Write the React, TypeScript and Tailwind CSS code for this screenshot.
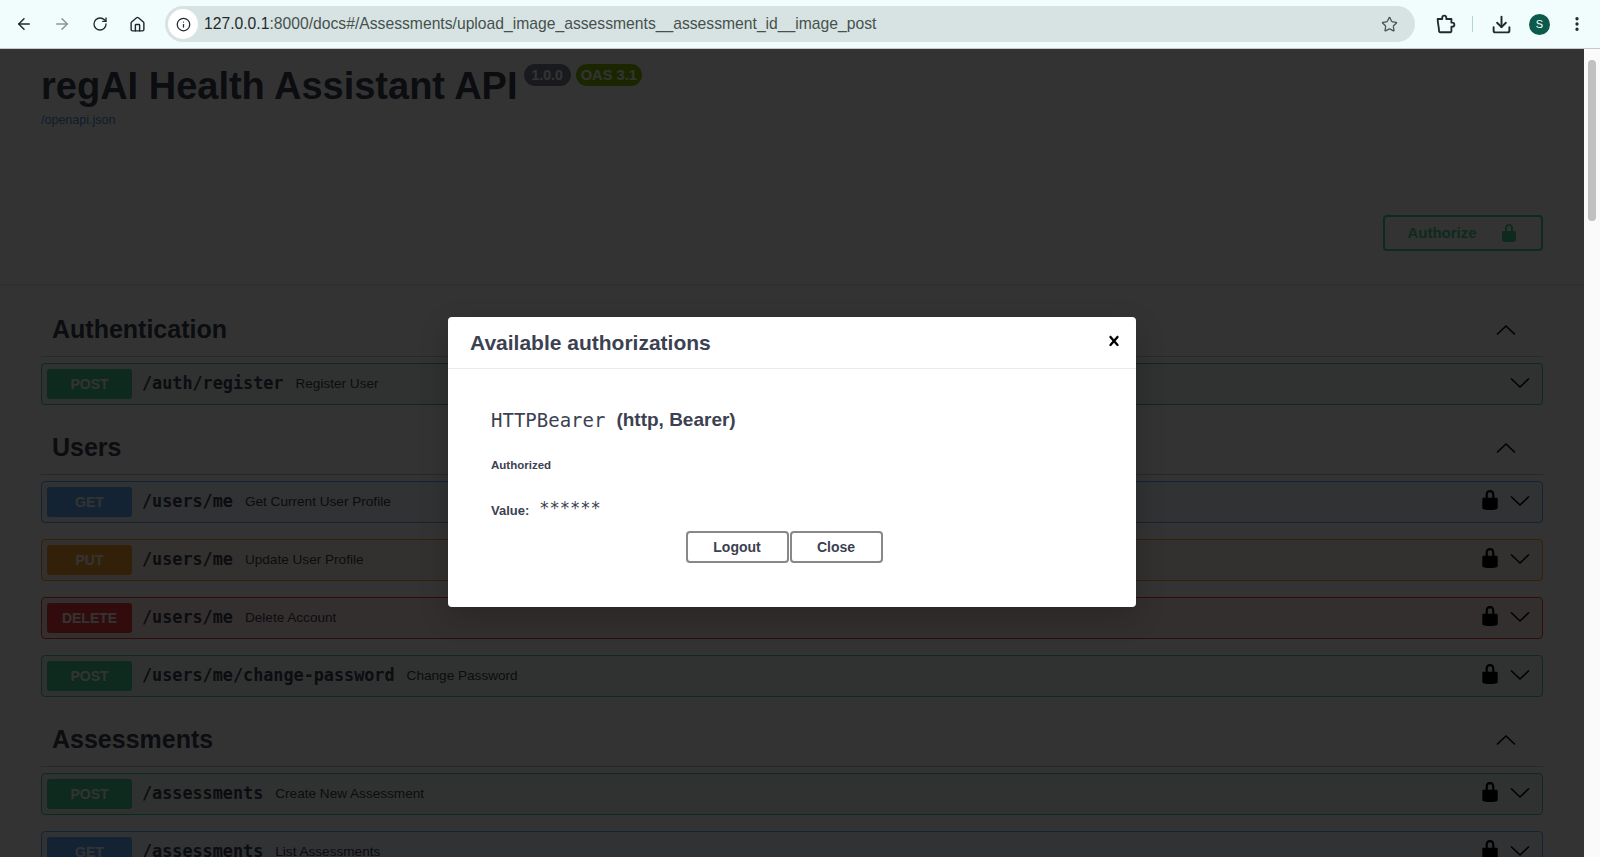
import React from "react";
import { ArrowLeft, ArrowRight, RotateCw, Home, Info, Star, Download, MoreVertical } from "lucide-react";

const LOCK =
  "M15.8 8H14V5.6C14 2.703 12.665 1 10 1 7.334 1 6 2.703 6 5.6V8H4c-.553 0-1 .646-1 1.199V17c0 .549.428 1.139.951 1.307l1.197.387C5.672 18.861 6.55 19 7.1 19h5.8c.549 0 1.428-.139 1.951-.307l1.196-.387c.524-.167.953-.757.953-1.306V9.199C17 8.646 16.352 8 15.8 8zM12 8H8V5.199C8 3.754 8.797 3 10 3c1.203 0 2 .754 2 2.199V8z";

function Lock({ className }: { className: string }) {
  return (
    <svg viewBox="0 0 20 20" className={className} fill="currentColor">
      <path d={LOCK} />
    </svg>
  );
}

const methodStyles = {
  POST: { row: "border-[#49cc90] bg-[#49cc90]/10", badge: "bg-[#49cc90]" },
  GET: { row: "border-[#61affe] bg-[#61affe]/10", badge: "bg-[#61affe]" },
  PUT: { row: "border-[#fca130] bg-[#fca130]/10", badge: "bg-[#fca130]" },
  DELETE: { row: "border-[#f93e3e] bg-[#f93e3e]/10", badge: "bg-[#f93e3e]" },
};

type Method = keyof typeof methodStyles;

function Operation({ method, path, summary, locked = true }: { method: Method; path: string; summary: string; locked?: boolean }) {
  const s = methodStyles[method];
  return (
    <div className={`flex h-[42px] shrink-0 items-center rounded border pl-[5px] pr-[12px] ${s.row}`}>
      <div className={`flex h-[30px] w-[85px] shrink-0 items-center justify-center rounded-[3px] text-sm font-bold text-white ${s.badge}`}>
        {method}
      </div>
      <span className="ml-[10px] font-['DejaVu_Sans_Mono',monospace] text-[16.8px] font-bold text-[#3b4151]">{path}</span>
      <span className="ml-[12px] text-[13.6px] text-[#3b4151]">{summary}</span>
      <div className="ml-auto flex items-center gap-[7px] text-black">
        {locked && <Lock className="mb-[3px] h-[22px] w-[22px]" />}
        <svg viewBox="0 0 20 12" className="mb-[2px] ml-[2px] h-[12px] w-[20px]" fill="none" stroke="currentColor" strokeWidth="1.6">
          <path d="M1 1.5l9 8.5 9-8.5" />
        </svg>
      </div>
    </div>
  );
}

function Section({ title, children }: { title: string; children: React.ReactNode }) {
  return (
    <section>
      <div className="flex h-[53px] items-center justify-between border-b border-[#3b4151]/30 pl-[11px] pr-[27px]">
        <h3 className="text-[25px] font-bold text-[#3b4151]">{title}</h3>
        <svg viewBox="0 0 20 12" className="h-[12px] w-[20px] text-black" fill="none" stroke="currentColor" strokeWidth="1.6">
          <path d="M1 10.5l9-8.5 9 8.5" />
        </svg>
      </div>
      <div className="mt-[6px] flex flex-col gap-[16px]">{children}</div>
    </section>
  );
}

function Browser() {
  return (
    <div className="flex h-[49px] shrink-0 items-center border-b border-[#c4cccb] bg-[#f1fdfc] pl-[15px] pr-[13px] text-[#1f2a2c]">
      <ArrowLeft size={18} strokeWidth={2} />
      <ArrowRight size={18} strokeWidth={2} className="ml-[20px] text-[#8a9596]" />
      <RotateCw size={16} strokeWidth={2} className="ml-[21px]" />
      <Home size={17} strokeWidth={2} className="ml-[21px]" />
      <div className="ml-[19px] flex h-[36px] w-[1250px] items-center rounded-full bg-[#d7e3e2] pl-[3px] pr-[17px]">
        <div className="flex h-[30px] w-[30px] items-center justify-center rounded-full bg-white">
          <Info size={15} strokeWidth={2} />
        </div>
        <span className="ml-[6px] text-[15.7px] text-[#46514f]">
          <span className="text-[#1f2a2c]">127.0.0.1</span>:8000/docs#/Assessments/upload_image_assessments__assessment_id__image_post
        </span>
        <Star size={17} strokeWidth={1.8} className="ml-auto text-[#4a5453]" />
      </div>
      {/* chrome's extensions puzzle, lucide's one has the knobs elsewhere */}
      <svg viewBox="0 0 24 24" className="ml-[19px] h-[22px] w-[22px]" fill="none" stroke="currentColor" strokeWidth="2" strokeLinejoin="round">
        <path d="M4 6.5h5V5a2.2 2.2 0 0 1 4.4 0v1.500H19V10.500h1a2.200 2.200 0 0 1 0 4.400h-1V20a1 1 0 0 1-1 1H6.500a1 1 0 0 1-1-1c0-4.500-1.500-9-1.500-13.500z" />
      </svg>
      <div className="ml-[16px] h-[16px] w-px bg-[#b9d3d1]" />
      <Download size={21} strokeWidth={2.2} className="ml-[18px]" />
      <div className="ml-[17px] flex h-[21px] w-[21px] items-center justify-center rounded-full bg-[#0b5a4b] text-[11px] text-white">S</div>
      <MoreVertical size={18} strokeWidth={2.4} className="ml-[18px]" />
    </div>
  );
}

export default function App() {
  return (
    <div className="flex h-[857px] w-[1600px] flex-col overflow-hidden bg-white font-['Liberation_Sans',sans-serif]">
      <Browser />
      <div className="flex min-h-0 flex-1">
        <div className="relative min-w-0 flex-1 overflow-hidden">
          <div className="px-[41px]">
            <div className="flex items-start pt-[14px]">
              <h2 className="text-[38px] leading-[46px] font-bold text-[#3b4151]">regAI Health Assistant API</h2>
              <span className="mt-[1px] ml-[6px] rounded-full bg-[#7d8492] px-[8px] py-[3px] text-sm leading-4 font-bold text-white">1.0.0</span>
              <span className="mt-[1px] ml-[5px] rounded-full bg-[#89bf04] px-[5px] py-[3px] text-[14.700px] leading-4 font-bold text-white">OAS 3.1</span>
            </div>
            <a className="mt-[2px] block text-[12.500px] text-[#4990e2]">/openapi.json</a>
          </div>
          <div className="mt-[84px] flex h-[70px] justify-end px-[41px] pt-[1px] shadow-[0_1px_2px_0_rgba(0,0,0,0.15)]">
            <button className="flex h-[36px] w-[160px] items-center justify-center gap-[22px] rounded border-2 border-[#49cc90] text-[15px] font-bold text-[#49cc90]">
              Authorize
              <Lock className="h-[20px] w-[20px]" />
            </button>
          </div>
          <div className="mt-[20px] flex flex-col gap-[17px] px-[41px]">
            <Section title="Authentication">
              <Operation method="POST" path="/auth/register" summary="Register User" locked={false} />
            </Section>
            <Section title="Users">
              <Operation method="GET" path="/users/me" summary="Get Current User Profile" />
              <Operation method="PUT" path="/users/me" summary="Update User Profile" />
              <Operation method="DELETE" path="/users/me" summary="Delete Account" />
              <Operation method="POST" path="/users/me/change-password" summary="Change Password" />
            </Section>
            <Section title="Assessments">
              <Operation method="POST" path="/assessments" summary="Create New Assessment" />
              <Operation method="GET" path="/assessments" summary="List Assessments" />
            </Section>
          </div>

          <div className="absolute inset-0 flex justify-center bg-black/80 pt-[268px]">
            <div className="h-[290px] w-[688px] rounded bg-white shadow-[0_10px_30px_0_rgba(0,0,0,0.2)]">
              <div className="flex h-[52px] items-center justify-between border-b border-[#ebebeb] pl-[22px] pr-[12px]">
                <h3 className="text-[21px] font-bold text-[#3b4151]">Available authorizations</h3>
                <svg viewBox="0 0 20 20" className="mb-[4px] h-[20px] w-[20px] text-black" fill="currentColor">
                  <path d="M14.348 14.849c-.469.469-1.229.469-1.697 0L10 11.819l-2.651 3.029c-.469.469-1.229.469-1.697 0-.469-.469-.469-1.229 0-1.697l2.758-3.150-2.759-3.152c-.469-.469-.469-1.228 0-1.697s1.228-.469 1.697 0L10 8.183l2.651-3.031c.469-.469 1.228-.469 1.697 0s.469 1.229 0 1.697l-2.758 3.152 2.758 3.150c.469.469.469 1.229 0 1.698z" />
                </svg>
              </div>
              <div className="pl-[43px] pt-[39px]">
                <h4 className="flex items-center gap-[11px] text-lg leading-6 font-bold text-[#3b4151]">
                  <code className="font-['DejaVu_Sans_Mono',monospace] text-[19px] font-normal">HTTPBearer</code>
                  <span className="text-[19px]">(http, Bearer)</span>
                </h4>
                <h6 className="mt-[25px] text-[11.500px] leading-4 font-bold text-[#3b4151]">Authorized</h6>
                <div className="mt-[23px] flex items-center text-[13px] font-bold text-[#3b4151]">
                  Value:
                  <code className="mb-[3px] ml-[10px] font-['DejaVu_Sans_Mono',monospace] text-[17px] font-medium">******</code>
                </div>
              </div>
              <div className="mt-[6px] flex justify-center pr-[16px]">
                <button className="h-[32px] w-[103px] rounded border-2 border-[#888] text-sm leading-none font-bold text-[#3b4151]">Logout</button>
                <button className="ml-px h-[32px] w-[93px] rounded border-2 border-[#888] text-sm leading-none font-bold text-[#3b4151]">Close</button>
              </div>
            </div>
          </div>
        </div>
        <div className="w-[16px] shrink-0 bg-[#fafafa] pt-[11px] pl-[4px]">
          <div className="h-[161px] w-[8px] rounded-full bg-[#c1c1c1]" />
        </div>
      </div>
    </div>
  );
}
